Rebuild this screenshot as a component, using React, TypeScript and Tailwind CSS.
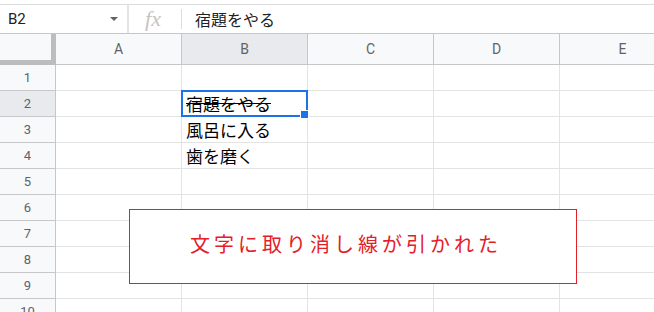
import React from "react";

// Spreadsheet snapshot: formula bar, headers, grid, a strikethrough cell and a callout box.

const COLS = ["A", "B", "C", "D", "E"];
const ROWS = [1, 2, 3, 4, 5, 6, 7, 8, 9, 10];

const CELLS: Record<string, { text: string; strike?: boolean }> = {
  B2: { text: "宿題をやる", strike: true },
  B3: { text: "風呂に入る" },
  B4: { text: "歯を磨く" },
};

const JP = "font-['Noto_Sans_CJK_JP','Noto_Sans',sans-serif]";

export default function App() {
  return (
    <div className="relative w-[654px] h-[312px] overflow-hidden bg-white font-['Roboto','Liberation_Sans',Arial,sans-serif]">
      {/* top gap */}
      <div className="h-[5px] border-b border-[#dadce0]" />

      {/* formula bar */}
      <div className="flex h-[29px] items-center border-b border-[#c7c7c7]">
        <div className="flex w-[127px] items-center justify-between pl-[8px] pr-[9px] text-[15px] text-[#202124]">
          <span>B2</span>
          <span className="h-0 w-0 border-x-[4px] border-t-[4px] border-x-transparent border-t-[#5f6368]" />
        </div>
        <div className="h-full w-[2px] bg-[#e3e3e3]" />
        <div className="flex w-[52px] items-center justify-center pr-[4px] font-['Liberation_Serif',serif] text-[22px] italic leading-none text-[#c4c4c4]">
          fx
        </div>
        <div className="h-[20px] w-px bg-[#dadce0]" />
        <div className={`pl-[13px] text-[16px] text-[#202124] ${JP}`}>宿題をやる</div>
      </div>

      {/* column headers */}
      <div className="flex h-[31px]">
        <div className="w-[56px] shrink-0 border-r-[5px] border-b-[5px] border-[#bdbdbd] bg-[#f8f9fa]" />
        {COLS.map((c) => (
          <div
            key={c}
            className={`flex w-[126px] shrink-0 items-center justify-center border-r border-b border-[#c7c7c7] text-[14px] text-[#5f6368] ${
              c === "B" ? "bg-[#e8eaed]" : "bg-[#f8f9fa]"
            }`}
          >
            {c}
          </div>
        ))}
      </div>

      {/* rows */}
      {ROWS.map((r) => (
        <div key={r} className="flex h-[26px]">
          <div
            className={`flex w-[56px] shrink-0 items-center justify-center border-r border-b border-[#c7c7c7] text-[13px] text-[#5f6368] ${
              r === 2 ? "bg-[#e8eaed]" : "bg-[#f8f9fa]"
            }`}
          >
            {r}
          </div>
          {COLS.map((c) => {
            const cell = CELLS[`${c}${r}`];
            const selected = c === "B" && r === 2;
            return (
              <div
                key={c}
                className={`relative flex w-[126px] shrink-0 items-center border-r border-b border-[#e2e3e3] pl-[4px] ${
                  selected ? "z-10" : ""
                }`}
              >
                {cell && (
                  <span
                    className={`text-[17px] leading-none text-black ${JP} ${cell.strike ? "line-through" : ""}`}
                  >
                    {cell.text}
                  </span>
                )}
                {selected && (
                  <>
                    <div className="absolute -left-[1px] -top-[1px] h-[27px] w-[127px] border-2 border-[#1a73e8]" />
                    <div className="absolute -bottom-[2px] -right-[1px] h-[7px] w-[7px] bg-[#1a73e8] outline outline-1 outline-white" />
                  </>
                )}
              </div>
            );
          })}
        </div>
      ))}

      {/* callout box */}
      <div className="absolute left-[129px] top-[209px] z-20 flex h-[75px] w-[448px] items-center border border-[#e3202a] bg-white pb-[6px] pl-[60px]">
        <span className={`text-[20px] tracking-[4px] text-[#e3202a] ${JP}`}>
          文字に取り消し線が引かれた
        </span>
      </div>
    </div>
  );
}
